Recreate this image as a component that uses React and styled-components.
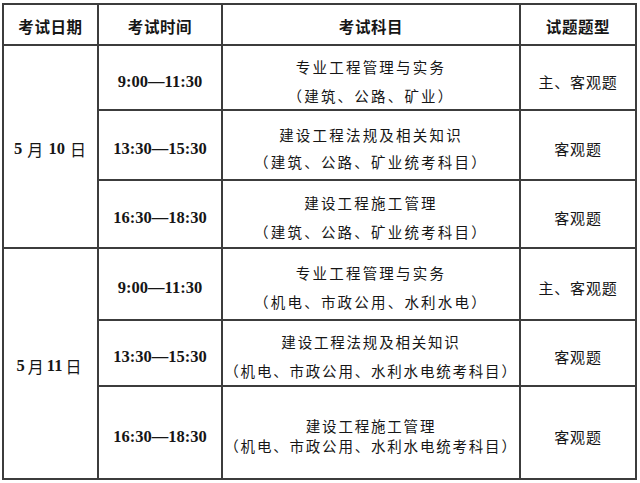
import React from "react";
import styled, { createGlobalStyle } from "styled-components";

const Global = createGlobalStyle`
  html, body { margin: 0; padding: 0; background: #ffffff; }
  body { font-family: "Noto Sans CJK SC", sans-serif; color: #111; }
`;

const Page = styled.div`
  width: 640px;
  height: 483px;
  padding: 3px 0 0 2px;
  box-sizing: border-box;
  background: #fff;
`;

const Grid = styled.div`
  display: grid;
  grid-template-columns: 95px 124px 298px 116px;
  grid-template-rows: 41px 65px 70px 68px 72px 66px 93px;
  width: 635px;
  box-sizing: border-box;
  border-left: 2px solid #3c3c3c;
  border-top: 2px solid #3c3c3c;
`;

const Cell = styled.div`
  box-sizing: border-box;
  border-right: 2px solid #3c3c3c;
  border-bottom: 2px solid #3c3c3c;
  display: flex;
  flex-direction: column;
  align-items: center;
  justify-content: center;
  padding-top: 6px;
  color: #161616;
  text-align: center;
`;

const HeadCell = styled(Cell)`
  font-family: "Noto Sans CJK SC", sans-serif;
  font-weight: 700;
  font-size: 15.5px;
  letter-spacing: 0.6px;
  padding-top: 2px;
`;

const DateCell = styled(Cell)`
  grid-column: 1;
  grid-row: span ${(p) => p.$span};
  flex-direction: row;
  font-family: "Liberation Serif", serif;
  font-weight: 700;
  font-size: 16.5px;
  white-space: pre;
  padding-top: 4px;
`;

const Unit = styled.span`
  font-family: "Noto Sans CJK SC", sans-serif;
  font-weight: 400;
  font-size: 16px;
  margin: 0 ${(p) => p.$m ?? 0}px;
`;

const TimeCell = styled(Cell)`
  grid-column: 2;
  font-family: "Liberation Serif", serif;
  font-weight: 700;
  font-size: 16.5px;
  padding-top: 8px;
`;

const SubjectCell = styled(Cell)`
  grid-column: 3;
  font-family: "Noto Sans CJK SC", sans-serif;
  font-weight: 400;
  font-size: 14.5px;
`;

const Line = styled.div`
  letter-spacing: ${(p) => p.$ls ?? 2.2}px;
  line-height: ${(p) => p.$lh}px;
  white-space: nowrap;
`;

const TypeCell = styled(Cell)`
  grid-column: 4;
  font-family: "Noto Sans CJK SC", sans-serif;
  font-weight: 400;
  font-size: 15px;
  letter-spacing: 0.8px;
  padding-top: 7px;
`;

const groups = [
  {
    date: (
      <>
        5 <Unit $m={1}>月</Unit> 10 <Unit $m={1}>日</Unit>
      </>
    ),
    rows: [
      { time: "9:00—11:30", lines: ["专业工程管理与实务", "（建筑、公路、矿业）"], type: "主、客观题", lh: 29 },
      { time: "13:30—15:30", lines: ["建设工程法规及相关知识", "（建筑、公路、矿业统考科目）"], type: "客观题", lh: 27 },
      { time: "16:30—18:30", lines: ["建设工程施工管理", "（建筑、公路、矿业统考科目）"], type: "客观题", lh: 29 },
    ],
  },
  {
    date: (
      <>
        5<Unit $m={3}>月</Unit>11<Unit $m={3}>日</Unit>
      </>
    ),
    rows: [
      { time: "9:00—11:30", lines: ["专业工程管理与实务", "（机电、市政公用、水利水电）"], type: "主、客观题", lh: 29 },
      { time: "13:30—15:30", lines: ["建设工程法规及相关知识", "（机电、市政公用、水利水电统考科目）"], type: "客观题", lh: 29, ls: 1.8 },
      { time: "16:30—18:30", lines: ["建设工程施工管理", "（机电、市政公用、水利水电统考科目）"], type: "客观题", lh: 20, ls: 1.8 },
    ],
  },
];

export default function App() {
  return (
    <>
      <Global />
      <Page>
        <Grid>
          <HeadCell>考试日期</HeadCell>
          <HeadCell>考试时间</HeadCell>
          <HeadCell>考试科目</HeadCell>
          <HeadCell>试题题型</HeadCell>
          {groups.map((g, gi) => (
            <React.Fragment key={gi}>
              <DateCell $span={g.rows.length}>{g.date}</DateCell>
              {g.rows.map((r, ri) => (
                <React.Fragment key={ri}>
                  <TimeCell>{r.time}</TimeCell>
                  <SubjectCell>
                    {r.lines.map((l, li) => (
                      <Line key={li} $lh={r.lh} $ls={r.ls}>
                        {l}
                      </Line>
                    ))}
                  </SubjectCell>
                  <TypeCell>{r.type}</TypeCell>
                </React.Fragment>
              ))}
            </React.Fragment>
          ))}
        </Grid>
      </Page>
    </>
  );
}
